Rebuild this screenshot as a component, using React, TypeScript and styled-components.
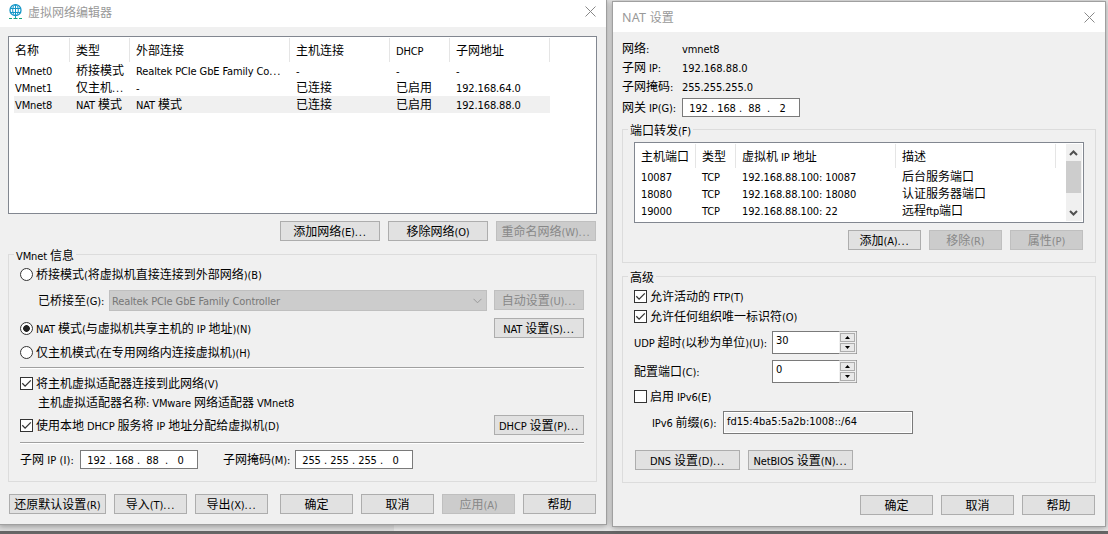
import React from 'react';
import styled, { createGlobalStyle, css } from 'styled-components';

const Global = createGlobalStyle`
  * { box-sizing: border-box; }
  body { margin: 0; overflow: hidden; }
`;

const LATIN = '"DejaVu Sans Condensed", "DejaVu Sans", sans-serif';
const HAN = '"Noto Sans CJK SC", sans-serif';

/* ---------- text ---------- */

const Line = styled.span<{ $w?: number }>`
  display: block;
  flex: none;
  white-space: pre;
  line-height: 15px;
  height: 17px;
  ${(p) => p.$w && css`width: ${p.$w}px;`}
`;

const Latin = styled.span<{ $track: number }>`
  font: 11px/15px ${LATIN};
  font-stretch: condensed;
  letter-spacing: ${(p) => p.$track}px;
`;

const Han = styled.span`
  font: 12px/15px ${HAN};
`;

function Text({ children, w, track = -0.12 }: { children: string; w?: number; track?: number }) {
  const runs = children.match(/[\u4e00-\u9fff]+|\.\.\.|(?:(?!\.\.\.)[^\u4e00-\u9fff])+/g) ?? [];
  return (
    <Line $w={w}>
      {runs.map((run, i) =>
        /[\u4e00-\u9fff]/.test(run) ? (
          <Han key={i}>{run}</Han>
        ) : (
          <Latin key={i} $track={run === '...' ? 0.85 : track}>{run}</Latin>
        )
      )}
    </Line>
  );
}

/* ---------- windows ---------- */

const Desktop = styled.div`
  position: relative;
  width: 1108px;
  height: 534px;
  overflow: hidden;
  color: #000;
  background: linear-gradient(#666 0 0) 0 531px / 100% 3px no-repeat,
    linear-gradient(#dcdcdc 0 0) 0 0 / 394px 100% no-repeat, #e8e8e8;
`;

const Window = styled.section<{ $x: number; $y: number; $width: number; $height: number }>`
  position: absolute;
  left: ${(p) => p.$x}px;
  top: ${(p) => p.$y}px;
  width: ${(p) => p.$width}px;
  height: ${(p) => p.$height}px;
  display: flex;
  flex-direction: column;
  background: #f0f0f0;
  border: 1px solid #a0a0a0;
  box-shadow: 0 1px 6px rgba(0, 0, 0, 0.35);
`;

const TitleBar = styled.header<{ $height: number; $pad: string }>`
  flex: none;
  display: flex;
  align-items: center;
  gap: 6px;
  height: ${(p) => p.$height}px;
  padding: ${(p) => p.$pad};
  background: #fff;
  svg { flex: none; display: block; }
`;

const Title = styled.h1`
  flex: 1;
  margin: 0;
  font: 12px/18px ${HAN};
  color: #999;
`;

const TitleLatin = styled.span`
  font: 12.5px/18px "Noto Sans", sans-serif;
  letter-spacing: 0.2px;
`;

const Body = styled.div<{ $pad: string }>`
  display: flex;
  flex-direction: column;
  padding: ${(p) => p.$pad};
`;

const Row = styled.div<{ $h: number; $mt?: number; $pl?: number; $pr?: number; $gap?: number; $end?: boolean }>`
  flex: none;
  display: flex;
  align-items: center;
  height: ${(p) => p.$h}px;
  margin-top: ${(p) => p.$mt ?? 0}px;
  padding-left: ${(p) => p.$pl ?? 0}px;
  padding-right: ${(p) => p.$pr ?? 0}px;
  gap: ${(p) => p.$gap ?? 0}px;
  ${(p) => p.$end && css`justify-content: flex-end;`}
`;

const Push = styled.div`
  margin-left: auto;
`;

/* ---------- controls ---------- */

const ButtonBox = styled.button<{ $w: number; $ml?: number }>`
  flex: none;
  display: flex;
  align-items: center;
  justify-content: center;
  width: ${(p) => p.$w}px;
  height: 20px;
  margin: 0 0 0 ${(p) => p.$ml ?? 0}px;
  padding: 0;
  color: #000;
  background: #e1e1e1;
  border: 1px solid #adadad;
  &:disabled {
    color: #888;
    background: #ccc;
    border-color: #bfbfbf;
  }
`;

function Button({ w, ml, disabled, children }: { w: number; ml?: number; disabled?: boolean; children: string }) {
  return (
    <ButtonBox $w={w} $ml={ml} disabled={disabled}>
      <Text>{children}</Text>
    </ButtonBox>
  );
}

const Group = styled.fieldset<{ $h: number; $mt: number; $pad: string }>`
  flex: none;
  display: flex;
  flex-direction: column;
  min-width: 0;
  height: ${(p) => p.$h}px;
  margin: ${(p) => p.$mt}px 0 0;
  padding: ${(p) => p.$pad};
  border: 1px solid #dcdcdc;
`;

const Legend = styled.div`
  align-self: flex-start;
  height: 17px;
  margin: -8px 0 0 -6px;
  padding: 0 2px;
  background: #f0f0f0;
`;

const Rule = styled.div<{ $mt: number }>`
  flex: none;
  height: 2px;
  margin-top: ${(p) => p.$mt}px;
  background: #a0a0a0;
  border-bottom: 1px solid #fff;
`;

const Choice = styled.label`
  display: flex;
  align-items: center;
  gap: 3px;
`;

const RadioMark = styled.span<{ $on?: boolean }>`
  width: 13px;
  height: 13px;
  border: 1px solid #333;
  border-radius: 50%;
  background: ${(p) => (p.$on ? 'radial-gradient(circle, #222 3px, #fff 3.7px)' : '#fff')};
`;

const CheckMark = styled.span`
  width: 13px;
  height: 13px;
  border: 1px solid #333;
  background: #fff;
  svg { display: block; }
`;

function Radio({ on, children }: { on?: boolean; children: string }) {
  return (
    <Choice>
      <RadioMark $on={on} />
      <Text>{children}</Text>
    </Choice>
  );
}

function Check({ on, children }: { on?: boolean; children: string }) {
  return (
    <Choice>
      <CheckMark>
        {on && (
          <svg width="11" height="11" viewBox="0 0 11 11" fill="none" stroke="#333" strokeWidth="1.3">
            <path d="M1.3 5.3 L4.1 8.1 L9.8 2.4" />
          </svg>
        )}
      </CheckMark>
      <Text>{children}</Text>
    </Choice>
  );
}

const Combo = styled.div`
  flex: none;
  display: flex;
  align-items: center;
  justify-content: space-between;
  width: 378px;
  height: 21px;
  padding: 0 4px 0 2px;
  color: #777;
  background: #ccc;
  border: 1px solid #bfbfbf;
`;

const IpBox = styled.div`
  flex: none;
  display: flex;
  align-items: center;
  width: 118px;
  height: 19px;
  padding-left: 4px;
  background: #fff;
  border: 1px solid #7a7a7a;
`;

const Octet = styled.span`
  width: 23px;
  display: flex;
  justify-content: center;
`;

const Dot = styled.span`
  width: 5px;
  display: flex;
  justify-content: center;
`;

function IpField({ value }: { value: string }) {
  return (
    <IpBox>
      {value.split('.').map((part, i) => (
        <React.Fragment key={i}>
          {i > 0 && <Dot><Text>.</Text></Dot>}
          <Octet><Text>{part}</Text></Octet>
        </React.Fragment>
      ))}
    </IpBox>
  );
}

/* ---------- lists ---------- */

const ListBox = styled.div<{ $h: number; $pad: string }>`
  flex: none;
  display: flex;
  justify-content: space-between;
  height: ${(p) => p.$h}px;
  padding: ${(p) => p.$pad};
  background: #fff;
  border: 1px solid #828790;
`;

const Table = styled.div`
  display: flex;
  flex-direction: column;
`;

const HeadRow = styled.div`
  display: flex;
  height: 24px;
`;

const HeadCell = styled.div<{ $w: number }>`
  display: flex;
  align-items: center;
  width: ${(p) => p.$w}px;
  padding-left: 6px;
  border-right: 1px solid #e5e5e5;
`;

const DataRow = styled.div<{ $selected?: boolean }>`
  display: flex;
  height: 17px;
  margin-left: 5px;
  background: ${(p) => (p.$selected ? '#f0f0f0' : 'transparent')};
`;

const DataCell = styled.div<{ $w: number; $first?: boolean }>`
  width: ${(p) => (p.$first ? p.$w - 5 : p.$w)}px;
  padding-left: ${(p) => (p.$first ? 1 : 6)}px;
  overflow: hidden;
`;

function List({ cols, head, rows, selected }: { cols: number[]; head: string[]; rows: string[][]; selected?: number }) {
  return (
    <Table>
      <HeadRow>
        {head.map((h, i) => (
          <HeadCell key={i} $w={cols[i]}><Text>{h}</Text></HeadCell>
        ))}
      </HeadRow>
      {rows.map((r, y) => (
        <DataRow key={y} $selected={y === selected}>
          {r.map((c, i) => (
            <DataCell key={i} $w={cols[i]} $first={i === 0}><Text>{c}</Text></DataCell>
          ))}
        </DataRow>
      ))}
    </Table>
  );
}

const ScrollBar = styled.div`
  display: flex;
  flex-direction: column;
  justify-content: space-between;
  width: 16px;
  background: #f0f0f0;
  svg { display: block; }
`;

const Thumb = styled.div`
  width: 15px;
  height: 32px;
  margin-bottom: auto;
  background: #cdcdcd;
`;

/* ---------- NAT window fields ---------- */

const SpinBox = styled.div`
  display: flex;
  width: 85px;
  height: 23px;
  background: #fff;
  border: 1px solid #7a7a7a;
  border-right-color: #adadad;
`;

const SpinValue = styled.div`
  flex: 1;
  margin-top: -1px;
  padding-left: 3px;
`;

const SpinButtons = styled.div`
  display: flex;
  flex-direction: column;
  gap: 1px;
  width: 17px;
  margin: -1px 0;
  padding: 1px;
  background: #f0f0f0;
  border: solid #adadad;
  border-width: 1px 0;
`;

const SpinButton = styled.div`
  flex: 1;
  display: flex;
  align-items: center;
  justify-content: center;
  background: #e9e9e9;
  border: 1px solid #adadad;
`;

function Spin({ value }: { value: string }) {
  return (
    <SpinBox>
      <SpinValue><Text>{value}</Text></SpinValue>
      <SpinButtons>
        <SpinButton><svg width="5" height="3"><path d="M0 3 L2.5 0 L5 3Z" /></svg></SpinButton>
        <SpinButton><svg width="5" height="3"><path d="M0 0 L2.5 3 L5 0Z" /></svg></SpinButton>
      </SpinButtons>
    </SpinBox>
  );
}

const ReadOnly = styled.div`
  width: 190px;
  height: 23px;
  padding-left: 3px;
  background: #f0f0f0;
  border: 1px solid #7a7a7a;
  box-shadow: inset 0 0 0 1px #fff;
`;

const CloseIcon = () => (
  <svg width="11" height="11" viewBox="0 0 11 11" stroke="#888" strokeWidth="1">
    <path d="M0.5 0.5 L10.5 10.5 M10.5 0.5 L0.5 10.5" />
  </svg>
);

const GlobeIcon = () => (
  <svg width="13" height="16" viewBox="0 0 13 16" fill="none">
    <g stroke="#1497c8" strokeWidth="1">
      <circle cx="6.5" cy="6.2" r="5.5" strokeWidth="1.3" />
      <ellipse cx="6.5" cy="6.2" rx="2.8" ry="5.5" />
      <path d="M1.5 4.5 H11.5 M1.5 8.5 H11.5 M6.5 1 V14" />
    </g>
    <path d="M0 14.5 H3 M4.5 14.5 H8.5 M10 14.5 H13" stroke="#17a67c" />
  </svg>
);

const ScrollArrow = ({ d }: { d: string }) => (
  <svg width="15" height="17" viewBox="0 0 15 17" fill="none" stroke="#505050" strokeWidth="2">
    <path d={d} />
  </svg>
);

/* ---------- page ---------- */

export default function App() {
  return (
    <Desktop>
      <Global />

      <Window $x={-1} $y={-1} $width={608} $height={526}>
        <TitleBar $height={27} $pad="0 10px 4px 9px">
          <GlobeIcon />
          <Title>虚拟网络编辑器</Title>
          <CloseIcon />
        </TitleBar>
        <Body $pad="9px 9px 0 8px">
          <ListBox $h={178} $pad="1px 0 0 0">
            <List
              cols={[61, 60, 160, 100, 60, 100]}
              head={['名称', '类型', '外部连接', '主机连接', 'DHCP', '子网地址']}
              rows={[
                ['VMnet0', '桥接模式', 'Realtek PCIe GbE Family Co...', '-', '-', '-'],
                ['VMnet1', '仅主机...', '-', '已连接', '已启用', '192.168.64.0'],
                ['VMnet8', 'NAT 模式', 'NAT 模式', '已连接', '已启用', '192.168.88.0'],
              ]}
              selected={2}
            />
          </ListBox>
          <Row $h={20} $mt={7} $pr={1} $gap={8} $end>
            <Button w={100}>添加网络(E)...</Button>
            <Button w={100}>移除网络(O)</Button>
            <Button w={100} disabled>重命名网络(W)...</Button>
          </Row>

          <Group $h={228} $mt={13} $pad="0 12px 0 11px">
            <Legend><Text>VMnet 信息</Text></Legend>
            <Row $h={17} $mt={2}><Radio>桥接模式(将虚拟机直接连接到外部网络)(B)</Radio></Row>
            <Row $h={21} $mt={7} $pl={18}>
              <Text w={71}>已桥接至(G):</Text>
              <Combo>
                <Text>Realtek PCIe GbE Family Controller</Text>
                <svg width="9" height="6" fill="none" stroke="#999"><path d="M0.5 0.8 L4.5 4.8 L8.5 0.8" /></svg>
              </Combo>
              <Row $h={21} $pl={7}>
                <Row $h={20} $mt={-1}><Button w={90} disabled>自动设置(U)...</Button></Row>
              </Row>
            </Row>
            <Row $h={20} $mt={7}>
              <Radio on>NAT 模式(与虚拟机共享主机的 IP 地址)(N)</Radio>
              <Push><Button w={90}>NAT 设置(S)...</Button></Push>
            </Row>
            <Row $h={17} $mt={6}><Radio>仅主机模式(在专用网络内连接虚拟机)(H)</Radio></Row>
            <Rule $mt={6} />
            <Row $h={17} $mt={6}><Check on>将主机虚拟适配器连接到此网络(V)</Check></Row>
            <Row $h={17} $mt={2} $pl={18}><Text>主机虚拟适配器名称: VMware 网络适配器 VMnet8</Text></Row>
            <Row $h={20} $mt={4}>
              <Check on>使用本地 DHCP 服务将 IP 地址分配给虚拟机(D)</Check>
              <Push><Button w={90}>DHCP 设置(P)...</Button></Push>
            </Row>
            <Rule $mt={7} />
            <Row $h={19} $mt={6}>
              <Text w={60} track={0.1}>子网 IP (I):</Text>
              <IpField value="192.168.88.0" />
              <Row $h={19} $pl={25}>
                <Text w={72}>子网掩码(M):</Text>
                <IpField value="255.255.255.0" />
              </Row>
            </Row>
          </Group>

          <Row $h={20} $mt={12} $pl={1} $gap={8}>
            <Button w={97}>还原默认设置(R)</Button>
            <Button w={73}>导入(T)...</Button>
            <Button w={73}>导出(X)...</Button>
            <Button w={73} ml={4}>确定</Button>
            <Button w={73}>取消</Button>
            <Button w={73} disabled>应用(A)</Button>
            <Button w={73}>帮助</Button>
          </Row>
        </Body>
      </Window>

      <Window $x={612} $y={1} $width={494} $height={526}>
        <TitleBar $height={30} $pad="0 10px 0 9px">
          <Title><TitleLatin>NAT </TitleLatin>设置</Title>
          <CloseIcon />
        </TitleBar>
        <Body $pad="7px 9px 0 9px">
          <Row $h={19}><Text w={60}>网络:</Text><Text>vmnet8</Text></Row>
          <Row $h={19}><Text w={60}>子网 IP:</Text><Text track={-0.05}>192.168.88.0</Text></Row>
          <Row $h={19}><Text w={60}>子网掩码:</Text><Text>255.255.255.0</Text></Row>
          <Row $h={19} $mt={2}><Text w={60}>网关 IP(G):</Text><IpField value="192.168.88.2" /></Row>

          <Group $h={134} $mt={12} $pad="0 11px 0 11px">
            <Legend><Text>端口转发(F)</Text></Legend>
            <Row $h={3} />
            <ListBox $h={81} $pad="1px 1px 1px 0">
              <List
                cols={[61, 40, 160, 160]}
                head={['主机端口', '类型', '虚拟机 IP 地址', '描述']}
                rows={[
                  ['10087', 'TCP', '192.168.88.100: 10087', '后台服务端口'],
                  ['18080', 'TCP', '192.168.88.100: 18080', '认证服务器端口'],
                  ['19000', 'TCP', '192.168.88.100: 22', '远程ftp端口'],
                ]}
              />
              <ScrollBar>
                <ScrollArrow d="M4 11 L7.5 7.5 L11 11" />
                <Thumb />
                <ScrollArrow d="M4 7 L7.5 10.5 L11 7" />
              </ScrollBar>
            </ListBox>
            <Row $h={20} $mt={7} $pr={1} $gap={8} $end>
              <Button w={73}>添加(A)...</Button>
              <Button w={73} disabled>移除(R)</Button>
              <Button w={73} disabled>属性(P)</Button>
            </Row>
          </Group>

          <Group $h={207} $mt={13} $pad="0 12px 0 11px">
            <Legend><Text>高级</Text></Legend>
            <Row $h={17} $mt={2}><Check on>允许活动的 FTP(T)</Check></Row>
            <Row $h={17} $mt={3}><Check on>允许任何组织唯一标识符(O)</Check></Row>
            <Row $h={23} $mt={6}><Text w={138}>UDP 超时(以秒为单位)(U):</Text><Spin value="30" /></Row>
            <Row $h={23} $mt={6}><Text w={138}>配置端口(C):</Text><Spin value="0" /></Row>
            <Row $h={17} $mt={5}><Check>启用 IPv6(E)</Check></Row>
            <Row $h={23} $mt={6} $pl={18}>
              <Text w={71}>IPv6 前缀(6):</Text>
              <ReadOnly><Text track={0}>fd15:4ba5:5a2b:1008::/64</Text></ReadOnly>
            </Row>
            <Row $h={20} $mt={16} $pl={1} $gap={8}>
              <Button w={105}>DNS 设置(D)...</Button>
              <Button w={105}>NetBIOS 设置(N)...</Button>
            </Row>
          </Group>

          <Row $h={20} $mt={12} $pr={1} $gap={8} $end>
            <Button w={73}>确定</Button>
            <Button w={73}>取消</Button>
            <Button w={73}>帮助</Button>
          </Row>
        </Body>
      </Window>
    </Desktop>
  );
}
